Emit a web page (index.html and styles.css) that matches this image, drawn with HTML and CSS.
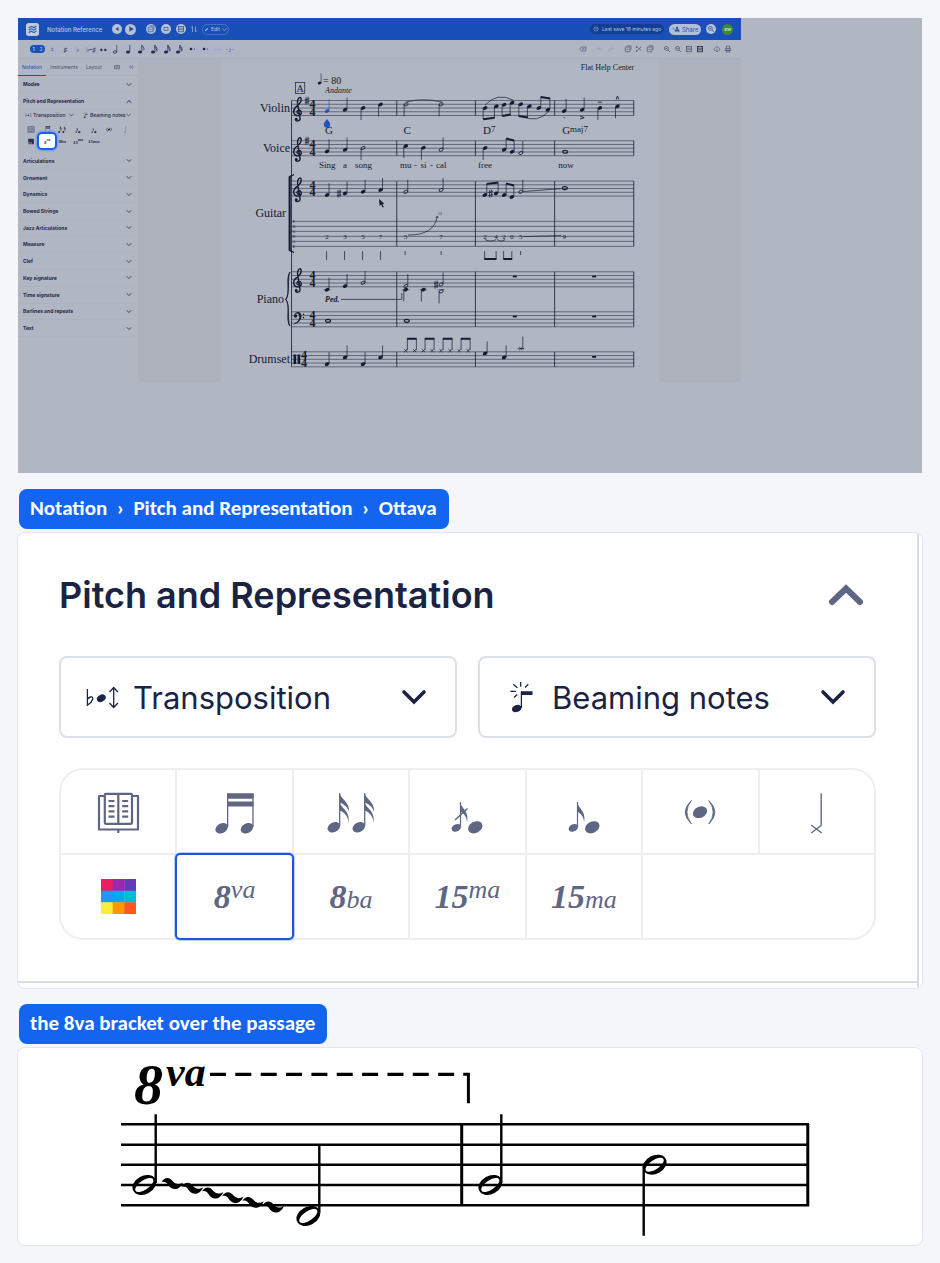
FILE: index.html
```html
<!DOCTYPE html>
<html lang="en">
<head>
    <meta charset="UTF-8">
    <meta name="viewport" content="width=device-width, initial-scale=1.0">
    <title>Ottava - Notation Reference</title>
    <link rel="stylesheet" href="styles.css">
</head>
<body>

<!-- shared icons -->
<svg class="defs" width="0" height="0" aria-hidden="true">
    <defs>
        <symbol id="i-book" viewBox="0 0 60 50">
            <g fill="none" stroke="currentColor" stroke-width="2.200" stroke-linejoin="round">
                <path d="M16 9h-5v33.500h39V9h-5"/>
                <rect x="16.800" y="6.800" width="27.200" height="30" rx="1"/>
                <path d="M30.300 7v29.500M30.300 43v3"/>
                <path d="M20.500 14h6M20.500 19.200h6M20.500 24.400h6M20.500 29.600h6M34.200 14h6M34.200 19.200h6M34.200 24.400h6M34.200 29.600h6"/>
            </g>
        </symbol>
        <symbol id="i-beam" viewBox="0 0 60 50">
            <g fill="currentColor">
                <ellipse cx="16.700" cy="41.200" rx="6.600" ry="4.800" transform="rotate(-28 16.700 41.200)"/>
                <ellipse cx="42" cy="41.200" rx="6.600" ry="4.800" transform="rotate(-28 42 41.200)"/>
                <path d="M22 6.200h26.500v5.600H22zM22 14.400h26.500v5.200H22z"/>
                <path d="M22 6.200h1.300V40H22zM47.300 6.200h1.300V40h-1.300z"/>
            </g>
        </symbol>
        <symbol id="i-flags" viewBox="0 0 60 50">
            <g id="flagged">
                <ellipse cx="12.800" cy="40.200" rx="6.600" ry="4.800" transform="rotate(-28 12.800 40.200)" fill="currentColor"/>
                <path d="M18.700 6.200V39" stroke="currentColor" stroke-width="1.300"/>
                <path d="M18.700 6c.8 6 10.500 9 9.300 19-1.200-6-7-8.500-9.300-9.500zM18.700 15c.8 6 11.500 9 8.600 21.500.6-8-5.500-12-8.600-13z" fill="currentColor"/>
            </g>
            <use href="#flagged" x="25"/>
        </symbol>
        <symbol id="i-grace" viewBox="0 0 60 50">
            <ellipse cx="19.300" cy="40.900" rx="4.900" ry="3.600" transform="rotate(-28 19.300 40.900)" fill="currentColor"/>
            <path d="M23.500 15V40" stroke="currentColor" stroke-width="1.200"/>
            <path d="M23.200 15c.8 6 9.500 9.500 6.800 20.500 0-6-3.800-9.500-6.800-11z" fill="currentColor"/>
            <ellipse cx="38.300" cy="40.300" rx="7.600" ry="5.600" transform="rotate(-28 38.300 40.300)" fill="currentColor"/>
        </symbol>
        <symbol id="i-slash" viewBox="0 0 60 50">
            <use href="#i-grace" width="60" height="50"/>
            <path d="M18 33L30.500 21.500" stroke="currentColor" stroke-width="1.500"/>
        </symbol>
        <symbol id="i-paren" viewBox="0 0 60 50">
            <ellipse cx="30" cy="25.200" rx="7.500" ry="5.500" transform="rotate(-25 30 25.200)" fill="currentColor"/>
            <path d="M21.400 13.500Q9 25 21.400 37Q12.500 25 21.400 13.500zM38.800 13.500Q51 25 38.800 37Q47.500 25 38.800 13.500z" stroke="currentColor" stroke-width=".8" fill="currentColor"/>
        </symbol>
        <symbol id="i-cross" viewBox="0 0 60 50">
            <path d="M34.200 6.200V37.800M24.200 38l10.500 8M34.700 38l-10.500 8" stroke="currentColor" stroke-width="1.400"/>
        </symbol>
        <symbol id="i-colors" viewBox="0 0 35 35">
            <path fill="#e91e63" d="M0 0h12v12H0z"/><path fill="#9c27b0" d="M11.700 0h12v12h-12z"/><path fill="#673ab7" d="M23.300 0H35v12H23.300z"/>
            <path fill="#2196f3" d="M0 11.700h12v12H0z"/><path fill="#03a9f4" d="M11.700 11.700h12v12h-12z"/><path fill="#00bcd4" d="M23.300 11.700H35v12H23.300z"/>
            <path fill="#ffeb3b" d="M0 23.300h12V35H0z"/><path fill="#ff9800" d="M11.700 23.300h12V35h-12z"/><path fill="#ff5722" d="M23.300 23.300H35V35H23.300z"/>
        </symbol>
        <symbol id="i-transpose" viewBox="0 0 36 40">
            <path d="M3.400 12V28.300C9 25 10.500 19 6.500 20c-1.500.4-3 2-3 2" fill="none" stroke="currentColor" stroke-width="1.300"/>
            <ellipse cx="17.300" cy="21.300" rx="4.700" ry="3.400" transform="rotate(-28 17.300 21.300)" fill="currentColor"/>
            <path d="M29.700 10.800v19.500M25.500 15l4.200-4.500 4.200 4.500M25.500 26l4.200 4.500 4.200-4.500" fill="none" stroke="currentColor" stroke-width="1.300"/>
        </symbol>
        <symbol id="i-beaming" viewBox="0 0 36 40">
            <ellipse cx="13.700" cy="31.500" rx="4.900" ry="3.500" transform="rotate(-20 13.700 31.500)" fill="currentColor"/>
            <path d="M18 14.200h11.500v3.800H18z" fill="currentColor"/>
            <path d="M18.400 14.500V31M17.700 5v4.800M25.300 7.200L22 10.500M10.300 7.300l4 3.500M7.300 14.400h5.600M14.300 17.500L11 20.500" stroke="currentColor" stroke-width="1.300"/>
        </symbol>
        <symbol id="i-down" viewBox="0 0 28 20">
            <path d="M4 5l10 10L24 5" fill="none" stroke="currentColor" stroke-width="3.600" stroke-linecap="round"/>
        </symbol>
        <symbol id="i-up" viewBox="0 0 40 26">
            <path d="M6 20L20 6.500 34 20" fill="none" stroke="currentColor" stroke-width="6" stroke-linecap="round"/>
        </symbol>
        <!-- small toolbar notes -->
        <symbol id="t-half" viewBox="0 0 10 12"><ellipse cx="4" cy="9" rx="1.700" ry="1.200" fill="none" stroke="currentColor" stroke-width=".7"/><path d="M5.800 2v7" stroke="currentColor" stroke-width=".6"/></symbol>
        <symbol id="t-quarter" viewBox="0 0 10 12"><ellipse cx="4" cy="9" rx="2" ry="1.500" fill="currentColor"/><path d="M5.800 2v7" stroke="currentColor" stroke-width=".7"/></symbol>
        <symbol id="t-eighth" viewBox="0 0 10 12"><use href="#t-quarter" width="10" height="12"/><path d="M5.800 2c.5 2 3 2 2 5" fill="none" stroke="currentColor" stroke-width=".8"/></symbol>
        <symbol id="t-sixteenth" viewBox="0 0 10 12"><use href="#t-eighth" width="10" height="12"/><path d="M5.800 4c.5 2 3 2 2 4.500" fill="none" stroke="currentColor" stroke-width=".8"/></symbol>
        <symbol id="t-dot" viewBox="0 0 10 12"><circle cx="4" cy="6" r="1.300" fill="currentColor"/><circle cx="7.500" cy="6" r=".6" fill="currentColor"/></symbol>
        <symbol id="t-box" viewBox="0 0 10 10"><rect x="1.500" y="2.500" width="6" height="6" rx="1" fill="none" stroke="currentColor" stroke-width=".9"/><path d="M3.500 1h5.200v5M3 5.500h3" fill="none" stroke="currentColor" stroke-width=".8"/></symbol>
        <symbol id="t-lens" viewBox="0 0 10 10"><circle cx="4.300" cy="4.300" r="2.500" fill="none" stroke="currentColor" stroke-width=".9"/><path d="M6.200 6.200l2.500 2.500M3 4.300h2.600" stroke="currentColor" stroke-width=".9"/></symbol>
        <symbol id="t-page" viewBox="0 0 10 10"><rect x="2" y="2" width="6" height="6.500" fill="none" stroke="currentColor" stroke-width=".9"/><path d="M2 4h6M2 6h6" stroke="currentColor" stroke-width=".8"/></symbol>
    </defs>
</svg>

<main class="page">

    <!-- editor overview -->
    <section class="stage">
        <div class="app">
            <header class="app-bar">
                <svg class="logo" viewBox="0 0 12 12"><rect width="12" height="12" rx="2.500" fill="#c3cbda"/><path d="M2.500 4.500q2-2 3.500-.8t3.500-.9M2.500 6.700q2-2 3.500-.8t3.500-.9M2.500 9q2-2 3.500-.8t3.500-.9" fill="none" stroke="#255bb5" stroke-width="1.100"/></svg>
                <h1>Notation Reference</h1>
                <div class="transport">
                    <button aria-label="Rewind"><svg viewBox="0 0 10 10"><path d="M7 2.500v5L3 5z" fill="currentColor"/></svg></button>
                    <button class="play" aria-label="Play"><svg viewBox="0 0 10 10"><path d="M3 1.500v7L8.500 5z" fill="currentColor"/></svg></button>
                </div>
                <div class="modes">
                    <button aria-label="Mixer"><svg viewBox="0 0 10 10"><use href="#t-box"/></svg></button>
                    <button aria-label="Keyboard"><svg viewBox="0 0 10 10"><rect x="2.500" y="3" width="5" height="4" fill="none" stroke="currentColor" stroke-width=".8"/></svg></button>
                    <button aria-label="Print view"><svg viewBox="0 0 10 10"><use href="#t-page"/></svg></button>
                </div>
                <svg class="swap" viewBox="0 0 8 8"><path d="M2.500 7V1.500M1.200 2.800l1.300-1.500M5.500 1.500V7M6.800 5.500L5.500 7" fill="none" stroke="currentColor" stroke-width=".6"/></svg>
                <button class="edit"><svg viewBox="0 0 8 8"><path d="M1.500 6.500l.5-1.700L5.500 1.500l1.200 1.200L3.200 6z" fill="currentColor"/></svg>Edit<svg viewBox="0 0 28 20"><use href="#i-down"/></svg></button>
                <span class="saved"><svg viewBox="0 0 8 8"><circle cx="4" cy="4" r="2.800" fill="none" stroke="currentColor" stroke-width=".7"/><path d="M4 2.500V4l1 .6" fill="none" stroke="currentColor" stroke-width=".6"/></svg>Last save 16 minutes ago</span>
                <button class="share"><svg viewBox="0 0 10 8"><circle cx="6.500" cy="2.500" r="1.500" fill="currentColor"/><path d="M3.500 7c0-3.500 6-3.500 6 0zM.5 3.500h2.600M1.800 2.200v2.600" fill="currentColor" stroke="currentColor" stroke-width=".6"/></svg>Share</button>
                <button class="round" aria-label="Search"><svg viewBox="0 0 10 10"><use href="#t-lens"/></svg></button>
                <span class="avatar">SW</span>
            </header>

            <div class="toolbar">
                <div class="notes">
                    <span class="voice"><b>1</b>2</span>
                    <button>&#9838;</button>
                    <button>&#9839;</button>
                    <button>&#9837;</button>
                    <button>&#9837;&#8211;&#9839;</button>
                    <button>&#8226;&#8226;</button>
                    <button aria-label="Half"><svg><use href="#t-half"/></svg></button>
                    <button aria-label="Quarter"><svg><use href="#t-quarter"/></svg></button>
                    <button aria-label="Eighth"><svg><use href="#t-eighth"/></svg></button>
                    <button aria-label="16th"><svg><use href="#t-sixteenth"/></svg></button>
                    <button aria-label="32nd"><svg><use href="#t-sixteenth"/></svg></button>
                    <button aria-label="64th"><svg><use href="#t-sixteenth"/></svg></button>
                    <button aria-label="Dot"><svg><use href="#t-dot"/></svg></button>
                    <button aria-label="Double dot"><svg><use href="#t-dot"/></svg></button>
                    <button class="faint">&#8943;</button>
                    <button class="tuplet">&#8901;&#9834;&#8901;</button>
                </div>
                <div class="tools">
                    <button aria-label="Delete"><svg viewBox="0 0 10 10"><path d="M1 5l2-2.500h5.500v5H3zM4.500 4l2 2M6.500 4l-2 2" fill="none" stroke="currentColor" stroke-width=".8"/></svg></button>
                    <span class="pair faint">
                        <button aria-label="Undo"><svg viewBox="0 0 10 10"><path d="M2 4.500h4q3 1 1 3.500M4 2.500l-2 2 2 2" fill="none" stroke="currentColor" stroke-width=".7"/></svg></button>
                        <button aria-label="Redo"><svg viewBox="0 0 10 10"><path d="M8 4.500H4Q1 5.500 3 8M6 2.500l2 2-2 2" fill="none" stroke="currentColor" stroke-width=".7"/></svg></button>
                    </span>
                    <span class="pair">
                        <button aria-label="Copy"><svg><use href="#t-box"/></svg></button>
                        <button aria-label="Cut"><svg viewBox="0 0 10 10"><path d="M2 2l6 5M2 8l6-6" stroke="currentColor" stroke-width=".8"/><circle cx="2" cy="2.500" r="1" fill="currentColor"/><circle cx="2" cy="7.500" r="1" fill="currentColor"/></svg></button>
                        <button aria-label="Paste"><svg><use href="#t-box"/></svg></button>
                    </span>
                    <span class="pair">
                        <button aria-label="Zoom in"><svg><use href="#t-lens"/></svg></button>
                        <button aria-label="Zoom out"><svg><use href="#t-lens"/></svg></button>
                        <button aria-label="Page"><svg><use href="#t-page"/></svg></button>
                        <button class="dark" aria-label="Layout"><svg><use href="#t-page"/></svg></button>
                    </span>
                    <span class="pair">
                        <button aria-label="Download"><svg viewBox="0 0 10 10"><path d="M3 7H2Q.5 5 2.500 4q2.500-4 5 0Q9.500 5 8 7H7M5 4.500v4M3.800 7.300L5 8.500l1.200-1.200" fill="none" stroke="currentColor" stroke-width=".8"/></svg></button>
                        <button aria-label="Print"><svg viewBox="0 0 10 10"><path d="M3 4V1.500h4V4M1.500 4.500h7V7h-7zM3 6.500h4v2.300H3z" fill="none" stroke="currentColor" stroke-width=".9"/></svg></button>
                    </span>
                </div>
            </div>

            <div class="workspace">
                <aside class="side">
                    <nav class="tabs">
                        <a class="active" href="#notation">Notation</a>
                        <a href="#instruments">Instruments</a>
                        <a href="#layout">Layout</a>
                        <svg class="kbd" viewBox="0 0 8 8"><rect x="1" y="2" width="6" height="4.500" fill="none" stroke="currentColor" stroke-width=".8"/><path d="M2 3.600h4M2 5h4" stroke="currentColor" stroke-width=".7"/></svg>
                        <svg viewBox="0 0 8 8"><path d="M4 1.500L1.800 4 4 6.500M3 4h4M6.500 1.500L4.800 4l1.700 2.500" fill="none" stroke="currentColor" stroke-width=".6"/></svg>
                    </nav>
                    <button class="row">Modes<svg><use href="#i-down"/></svg></button>
                    <button class="row">Pitch and Representation<svg><use href="#i-up"/></svg></button>
                    <div class="mini">
                        <div class="mini-selects">
                            <label><svg class="lead"><use href="#i-transpose"/></svg><select aria-label="Transposition"><option>Transposition</option></select><svg class="arrow"><use href="#i-down"/></svg></label>
                            <label><svg class="lead"><use href="#i-beaming"/></svg><select aria-label="Beaming notes"><option>Beaming notes</option></select><svg class="arrow"><use href="#i-down"/></svg></label>
                        </div>
                        <div class="mini-grid">
                            <button aria-label="Book"><svg><use href="#i-book"/></svg></button>
                            <button aria-label="Beam"><svg><use href="#i-beam"/></svg></button>
                            <button aria-label="Flags"><svg><use href="#i-flags"/></svg></button>
                            <button aria-label="Acciaccatura"><svg><use href="#i-slash"/></svg></button>
                            <button aria-label="Appoggiatura"><svg><use href="#i-grace"/></svg></button>
                            <button aria-label="Ghost note"><svg><use href="#i-paren"/></svg></button>
                            <button aria-label="Note head"><svg><use href="#i-cross"/></svg></button>
                            <button aria-label="Colors"><svg viewBox="0 0 8 8"><path d="M1.500 1.500h5v5h-2V4.500h-3z" fill="#28304f"/><path d="M1.500 4.500h3v2h-3z" fill="#6c5570"/></svg></button>
                            <button class="spot"><i>8<sup>va</sup></i></button>
                            <button><i>8ba</i></button>
                            <button><i>15<sup>ma</sup></i></button>
                            <button><i>15ma</i></button>
                        </div>
                    </div>
                    <div class="rows">
                        <button class="row">Articulations<svg><use href="#i-down"/></svg></button>
                        <button class="row">Ornament<svg><use href="#i-down"/></svg></button>
                        <button class="row">Dynamics<svg><use href="#i-down"/></svg></button>
                        <button class="row">Bowed Strings<svg><use href="#i-down"/></svg></button>
                        <button class="row">Jazz Articulations<svg><use href="#i-down"/></svg></button>
                        <button class="row">Measure<svg><use href="#i-down"/></svg></button>
                        <button class="row">Clef<svg><use href="#i-down"/></svg></button>
                        <button class="row">Key signature<svg><use href="#i-down"/></svg></button>
                        <button class="row">Time signature<svg><use href="#i-down"/></svg></button>
                        <button class="row">Barlines and repeats<svg><use href="#i-down"/></svg></button>
                        <button class="row">Text<svg><use href="#i-down"/></svg></button>
                    </div>
                </aside>

                <!-- the sheet -->
                <div class="sheet">
                    <svg class="score" viewBox="221 59 438 323">
                        <defs>
                            <ellipse id="hd" rx="2.400" ry="1.700" transform="rotate(-25)"/>
                            <g id="q"><use href="#hd"/><path class="stem" d="M2 -.5V-12"/></g>
                            <g id="qd"><use href="#hd"/><path class="stem" d="M-2 .5V12"/></g>
                            <g id="hh"><ellipse rx="2.200" ry="1.400" transform="rotate(-25)" fill="none" stroke="#151b30" stroke-width=".8"/></g>
                            <g id="h"><use href="#hh"/><path class="stem" d="M2 -.5V-12"/></g>
                            <g id="hdn"><use href="#hh"/><path class="stem" d="M-2 .5V12"/></g>
                            <ellipse id="w" rx="2.500" ry="1.500" fill="none" stroke="#151b30" stroke-width="1.200"/>
                            <path id="sharp" d="M-1 -3.500V4M1 -4V3.500M-2.200 -1L2.200 -2M-2.200 2L2.200 1" stroke="#151b30" stroke-width=".8" fill="none"/>
                            <g id="treble"><path d="M.8 2C-1.500 2-1.800-1.400.8-1.800 4-1.800 4.200 3.500.3 3.800-5.500 3.800-5.500-2.500-1.500-5.500 2-8 4-10 3-13.500 1.400-16-1.200-12-.4-8.500L2 6.500C2.200 9.500-1.800 9.800-2.600 8" fill="none" stroke="#151b30" stroke-width="1.400"/><circle cx="-1.800" cy="7.400" r="1.400"/></g>
                            <g id="bass"><path d="M-3.500 0C-2.500-5 4-5 4 .8 3.500 5.500-1 8-4.500 9 0 6 1.800 4 1.800.8 1.500-3-2-3-3.500 0z"/><circle cx="-2" cy=".4" r="1.700"/><circle cx="6" cy="-1.400" r=".8"/><circle cx="6" cy="2" r=".8"/></g>
                            <g id="sig"><text class="sig" y="7.600">4</text><text class="sig" y="15.200">4</text></g>
                            <path id="staff" class="line" d="M291.500 0H633.700M291.500 3.750H633.700M291.500 7.500H633.700M291.500 11.250H633.700M291.500 15H633.700"/>
                            <path id="bars" class="bar" d="M396.700 0V15M475.300 0V15M554.500 0V15M633.600 0V15"/>
                            <path id="rest" d="M-2 -.8h4V1h-4z"/>
                            <path id="x" d="M-1.600 -1.500L1.600 1.500M-1.600 1.500L1.600 -1.500" stroke="#151b30" stroke-width=".7"/>
                        </defs>

                        <text class="credit" x="634" y="70">Flat Help Center</text>
                        <rect x="295.300" y="82.400" width="9.400" height="11" fill="none" stroke="#151b30" stroke-width=".7"/>
                        <text class="mark" x="300" y="91.500">A</text>
                        <use href="#q" transform="translate(319.500 83) scale(.8)"/>
                        <text class="tempo" x="323" y="84">= 80</text>
                        <text class="andante" x="325" y="93">Andante</text>

                        <g class="names">
                            <text x="290" y="112">Violin</text>
                            <text x="290" y="152">Voice</text>
                            <text x="286" y="217">Guitar</text>
                            <text x="284" y="303">Piano</text>
                            <text x="290" y="363">Drumset</text>
                        </g>

                        <!-- staves -->
                        <use href="#staff" y="100.500"/><use href="#bars" y="100.500"/>
                        <use href="#staff" y="140.700"/><use href="#bars" y="140.700"/>
                        <use href="#staff" y="181"/>
                        <path class="line" d="M291.500 221.300H633.700M291.500 226.300H633.700M291.500 231.300H633.700M291.500 236.300H633.700M291.500 241.300H633.700M291.500 246.300H633.700"/>
                        <path class="bar" d="M396.700 181V246.300M475.300 181V246.300M554.500 181V246.300M633.600 181V246.300"/>
                        <use href="#staff" y="271.700"/><use href="#staff" y="311.700"/>
                        <path class="bar" d="M396.700 271.700V326.700M475.300 271.700V326.700M554.500 271.700V326.700M633.600 271.700V326.700"/>
                        <use href="#staff" y="351.700"/><use href="#bars" y="351.700"/>
                        <path class="bar" d="M291.500 100.500V366.700"/>
                        <path d="M294 174.500l-5 2V250.500l5 2-3.800-2.500V177z" stroke="#151b30" stroke-width=".9"/>
                        <path d="M290 272c-5 5 1 22-4.500 27.300C291 304 285 321 290 326c-3-5 0-22-4-26.700 4-5.300 1-22 4-27.300z" stroke="#151b30" stroke-width=".8"/>

                        <!-- clefs and signatures -->
                        <use href="#treble" x="298" y="111.800"/><use href="#treble" x="298" y="152"/><use href="#treble" x="298" y="192.300"/><use href="#treble" x="298" y="283"/>
                        <use href="#bass" x="297.500" y="315.500"/>
                        <path d="M293.500 354.500h2.600v9.500h-2.600zM297.500 354.500h2.600v9.500h-2.600z"/>
                        <use href="#sharp" x="307" y="100.700"/><use href="#sharp" x="307" y="140.700"/>
                        <use href="#sig" x="312.500" y="100.500"/><use href="#sig" x="312.500" y="140.700"/><use href="#sig" x="312.500" y="181"/><use href="#sig" x="312.500" y="271.700"/><use href="#sig" x="312.500" y="311.700"/><use href="#sig" x="304" y="351.700"/>
                        <g class="tuning"><text x="294" y="223">E</text><text x="294" y="228">B</text><text x="294" y="233">G</text><text x="294" y="238">D</text><text x="294" y="243">A</text><text x="294" y="248">E</text></g>

                        <!-- violin -->
                        <g fill="#1c55bd"><use href="#hd" x="327" y="111"/><path d="M328.700 110.500h.6V99h-.6z"/><path d="M327 119q6 6.500 1.500 8.500h-3Q321 125.500 327 119z"/></g>
                        <use href="#q" x="345" y="109.700"/><use href="#qd" x="363" y="108"/><use href="#qd" x="380.500" y="104.500"/>
                        <use href="#hdn" x="406" y="104.300"/><use href="#hdn" x="441" y="104.300"/>
                        <path class="slur" d="M406 102q17-4.500 36 0M485 105Q497 92 513 100M522 116q15 8 27-5"/>
                        <use href="#hd" x="485" y="108"/><use href="#hd" x="496.300" y="106.300"/><use href="#hd" x="504" y="104.700"/><use href="#hd" x="512" y="102.700"/><use href="#hd" x="520.700" y="104.300"/><use href="#hd" x="529.300" y="106.300"/><use href="#hd" x="538.700" y="108"/><use href="#hd" x="547.700" y="109.700"/>
                        <path class="stem" d="M483 108v11M494.300 106v12M502 105v11M510 103v12M518.700 104v12M527.300 106v12M540.700 108V97M549.700 109V98"/>
                        <path class="beam" d="M483 119.300l11.500-1.500M502 116l8.500-1.500M518.500 116l9 1.500M540.500 97l9.500 1.500"/>
                        <use href="#q" x="564" y="111"/><use href="#q" x="582" y="109.700"/><use href="#qd" x="599.700" y="108"/><use href="#qd" x="617.300" y="106.300"/>
                        <circle cx="564" cy="117.600" r=".6"/>
                        <path d="M580 116.200l4 1.400-4 1.400M597.700 102.200h4M616 99.500l1.300-3.500 1.300 3.500" fill="none" stroke="#151b30" stroke-width=".9"/>
                        <g class="chords"><text x="325" y="134">G</text><text x="403.500" y="134">C</text><text x="483" y="134">D<tspan class="small" dy="-2">7</tspan></text><text x="562" y="134">G<tspan class="small" dy="-2">maj7</tspan></text></g>

                        <!-- voice -->
                        <use href="#q" x="327" y="151.300"/><use href="#q" x="345" y="149.700"/><use href="#hdn" x="363" y="148"/>
                        <use href="#qd" x="405.700" y="146"/><use href="#qd" x="423.300" y="147.700"/><use href="#h" x="441" y="149.700"/>
                        <use href="#qd" x="485" y="148"/><use href="#hd" x="504" y="149.700"/><use href="#hd" x="512" y="151.700"/><use href="#h" x="520.700" y="153"/><use href="#w" x="565" y="151.700"/>
                        <path class="stem" d="M506 149V138.500M514 151V140.500"/><path class="beam" d="M506 138.500l8 2"/>
                        <g class="lyrics"><text x="319" y="167.500">Sing</text><text x="343" y="167.500">a</text><text x="355" y="167.500">song</text><text x="400" y="167.500">mu</text><text x="414" y="167.500">-</text><text x="420.500" y="167.500">si</text><text x="430" y="167.500">-</text><text x="436" y="167.500">cal</text><text x="478" y="167.500">free</text><text x="558" y="167.500">now</text></g>

                        <!-- guitar -->
                        <use href="#q" x="327" y="195"/><use href="#sharp" x="339" y="193.500"/><use href="#q" x="345" y="193.300"/><use href="#q" x="363" y="191.700"/><use href="#q" x="380.500" y="190"/>
                        <use href="#h" x="405.700" y="191.700"/><use href="#h" x="441" y="190"/>
                        <use href="#hd" x="484.700" y="195"/><use href="#sharp" x="490.500" y="193.500"/><use href="#hd" x="496" y="193.300"/><use href="#hd" x="504" y="195"/><use href="#hd" x="511.700" y="197"/><use href="#h" x="520.700" y="191.700"/><use href="#w" x="564.700" y="188"/>
                        <path class="stem" d="M486.700 195V184M498 193V182.500M506 195V183.500M513.700 197V185.500M523 191.500L561 188.500"/>
                        <path class="beam" d="M486.500 184l11.700-1.500M506 183.500l8 2"/>
                        <path d="M379 199l.5 7 1.600-1.500 1.400 3 1.200-.6-1.400-2.900 2-.3z"/>
                        <g class="tab"><text x="327" y="238.500">2</text><text x="345" y="238.500">3</text><text x="363" y="238.500">5</text><text x="380.500" y="238.500">7</text><text x="405.500" y="238.500">5</text><text x="441" y="238.500">7</text><text x="485" y="238.500">2</text><text x="496" y="238.500">4</text><text x="504" y="238.500">2</text><text x="511.700" y="238.500">0</text><text x="520.700" y="238.500">5</text><text x="564" y="238.500">9</text></g>
                        <text class="tiny" x="440" y="215">12</text>
                        <path class="slur" d="M408 235q26 0 29-18M435.800 218l1.300-2 1 2M485 239.500q6 3 11 0M497 239.500q4 3 8 0M523 236.500L561 235.500"/>
                        <path class="stem" d="M326.500 251v9M344.500 251v9M362.500 251v9M380.500 251v9M405 251v4M441 251v4M484.500 251v8M496 251v8M503.500 251v8M511.700 251v8M520.500 251v4"/>
                        <path class="beam" d="M484.200 259h12.100M503.200 259H512"/>

                        <!-- piano -->
                        <path class="line" d="M323.500 289.700h7M402 289.700h7.500M419.500 289.700h7.500M437.500 289.700h7"/>
                        <use href="#q" x="327" y="289.700"/><use href="#q" x="345" y="286"/><use href="#h" x="363" y="282.700"/>
                        <use href="#h" x="405.700" y="286"/><use href="#qd" x="405.700" y="289.500"/><use href="#qd" x="423.300" y="289.500"/><use href="#sharp" x="436" y="284.500"/><use href="#h" x="441" y="284.300"/><use href="#hdn" x="441" y="291.300"/>
                        <text class="ped" x="325" y="301.500">Ped.</text>
                        <path class="stem" d="M341 299.300H401.700V293"/>
                        <use href="#w" x="328" y="320.700"/><use href="#w" x="406.700" y="320.700"/>
                        <use href="#rest" x="514.700" y="276.300"/><use href="#rest" x="594" y="276.300"/><use href="#rest" x="514.700" y="316.300"/><use href="#rest" x="594" y="316.300"/><use href="#rest" x="594" y="356.700"/>

                        <!-- drumset -->
                        <use href="#q" x="327" y="364"/><use href="#q" x="345" y="357.300"/><use href="#q" x="363" y="364"/><use href="#q" x="380.500" y="357.300"/>
                        <use href="#x" x="405.700" y="350.500"/><use href="#x" x="414.500" y="350.500"/><use href="#x" x="423.300" y="350.500"/><use href="#x" x="432" y="350.500"/><use href="#x" x="441" y="350.500"/><use href="#x" x="450" y="350.500"/><use href="#x" x="459" y="350.500"/><use href="#x" x="468" y="350.500"/>
                        <path class="stem" d="M407.300 350V338.500M416.300 350V338.500M425 350V338.500M434 350V338.500M443 350V338.500M452 350V338.500M461 350V338.500M470 350V338.500"/>
                        <path class="beam" d="M407 338.700h9.600M424.700 338.700h9.600M442.700 338.700h9.600M460.700 338.700h9.600"/>
                        <use href="#q" x="485" y="353.300"/><use href="#q" x="504" y="357.300"/><use href="#x" x="520.700" y="348.500"/><path class="stem" d="M522.700 349V336.500M517.500 348.500h6.500"/>
                    </svg>
                </div>
            </div>
        </div>
    </section>

    <!-- palette close-up -->
    <h2 class="tag">Notation &nbsp;› &nbsp;Pitch and Representation &nbsp;› &nbsp;Ottava</h2>
    <section class="card">
        <div class="edge">
            <div class="panel">
                <div class="panel-head">
                    <h3>Pitch and Representation</h3>
                    <button class="collapse" aria-label="Collapse"><svg><use href="#i-up"/></svg></button>
                </div>
                <div class="selects">
                    <label class="select"><svg class="lead"><use href="#i-transpose"/></svg><select aria-label="Transposition"><option>Transposition</option></select><svg class="arrow"><use href="#i-down"/></svg></label>
                    <label class="select"><svg class="lead"><use href="#i-beaming"/></svg><select aria-label="Beaming notes"><option>Beaming notes</option></select><svg class="arrow"><use href="#i-down"/></svg></label>
                </div>
                <div class="palette">
                    <button aria-label="Book"><svg><use href="#i-book"/></svg></button>
                    <button aria-label="Beam"><svg><use href="#i-beam"/></svg></button>
                    <button aria-label="Flags"><svg><use href="#i-flags"/></svg></button>
                    <button aria-label="Acciaccatura"><svg><use href="#i-slash"/></svg></button>
                    <button aria-label="Appoggiatura"><svg><use href="#i-grace"/></svg></button>
                    <button aria-label="Ghost note"><svg><use href="#i-paren"/></svg></button>
                    <button aria-label="Note head"><svg><use href="#i-cross"/></svg></button>
                    <button aria-label="Colors"><svg class="colors"><use href="#i-colors"/></svg></button>
                    <button class="selected"><span class="octave">8<small class="raised">va</small></span></button>
                    <button><span class="octave">8<small>ba</small></span></button>
                    <button><span class="octave">15<small class="raised">ma</small></span></button>
                    <button><span class="octave">15<small>ma</small></span></button>
                </div>
            </div>
        </div>
    </section>

    <!-- result -->
    <h2 class="tag second">the 8va bracket over the passage</h2>
    <section class="card result">
        <svg class="passage" viewBox="0 0 697 197">
            <defs>
                <path id="half" fill-rule="evenodd" transform="rotate(-28)" d="M-12.500 0a12.500 9.200 0 1 0 25 0a12.500 9.200 0 1 0-25 0zM-10.500 1a10.500 4.600 -6 1 0 21-2a10.500 4.600 -6 1 0-21 2z"/>
                <path id="wave" d="M0 1C3-4 8-4 11 0c3 3.500 6 4 10.500 1.500C18 9.500 11 9.500 7.500 5 5.500 1.500 3 0 0 1z"/>
            </defs>
            <path d="M0 76.300H688M0 96.700H688M0 116.700H688M0 137H688M0 157.300H688" stroke="#000" stroke-width="2.400"/>
            <path d="M340.700 76v82M686.800 76v82" stroke="#000" stroke-width="3"/>
            <text class="eight" x="13" y="55.500">8</text>
            <text class="va" x="45" y="37.500">va</text>
            <path d="M89 26.300H343" stroke="#000" stroke-width="3.200" stroke-dasharray="16 9.350"/>
            <path d="M342.500 26.300h4.900v29" fill="none" stroke="#000" stroke-width="3"/>
            <path d="M34.700 66.300V135M198.300 96.700V165M380.300 66.300V135M522.700 117v70.700" stroke="#000" stroke-width="2.400"/>
            <use href="#half" x="23.300" y="137"/>
            <use href="#half" x="187.300" y="168"/>
            <use href="#half" x="369.300" y="137"/>
            <use href="#half" x="533.700" y="116.700"/>
            <use href="#wave" x="40.500" y="133"/>
            <use href="#wave" x="60.700" y="137.700"/>
            <use href="#wave" x="80.900" y="142.400"/>
            <use href="#wave" x="101.100" y="147.100"/>
            <use href="#wave" x="121.300" y="151.800"/>
            <use href="#wave" x="141.500" y="156.500"/>
        </svg>
    </section>

</main>

</body>
</html>
```

FILE: styles.css
```css
* {
    box-sizing: border-box;
}
body {
    margin: 0;
    background-color: #f4f6fa;
    color: #1b2344;
    font-family: Inter, sans-serif;
}
button, select {
    margin: 0;
    padding: 0;
    border: none;
    background: none;
    color: inherit;
    font: inherit;
    cursor: pointer;
}
select {
    appearance: none;
}
a {
    color: inherit;
    text-decoration: none;
}
svg {
    display: block;
    flex: none;
}
.defs {
    position: absolute;
}
.page {
    padding: 18px 17px 17px;
}

/* editor overview */
.stage {
    min-height: 455px;
    margin: 0 1px;
    background-color: #b1b6c3;
    color: #1f2848;
}
.app {
    width: 80%;
}
.app button {
    display: flex;
    align-items: center;
    justify-content: center;
}
.app-bar {
    display: flex;
    align-items: center;
    height: 22px;
    padding: 0 8px;
    background-color: #1850b8;
    color: #b9c8e2;
    font-size: 6px;
}
.app-bar h1 {
    width: 65px;
    margin: 0 0 0 8px;
    font-size: 6px;
    font-weight: 500;
    white-space: nowrap;
}
.logo {
    width: 13px;
    height: 13px;
}
.transport, .modes {
    display: flex;
    gap: 3px;
}
.modes {
    gap: 5px;
    margin-left: 10px;
}
.transport button, .modes button, .round {
    width: 10px;
    height: 10px;
    border-radius: 50%;
    background-color: #b6c1d6;
    color: #2c4f8f;
}
.transport svg, .modes svg, .round svg {
    width: 8px;
    height: 8px;
}
.transport .play {
    width: 11px;
    height: 11px;
}
.swap {
    width: 8px;
    height: 8px;
    margin-left: 4px;
}
.app .edit {
    gap: 2px;
    width: 27px;
    height: 11px;
    margin-left: 4px;
    border: 1px solid #4673c6;
    border-radius: 6px;
    font-size: 5px;
}
.edit svg {
    width: 5px;
    height: 5px;
}
.saved {
    display: flex;
    align-items: center;
    gap: 3px;
    height: 10px;
    margin-left: auto;
    padding: 0 3px;
    border-radius: 5px;
    background-color: #123f94;
    font-size: 5px;
    white-space: nowrap;
}
.saved svg {
    width: 6px;
    height: 6px;
}
.app .share {
    gap: 2px;
    width: 32px;
    height: 11px;
    margin: 0 5px;
    border-radius: 6px;
    background-color: #b3bfd6;
    color: #2455ab;
    font-size: 6px;
}
.share svg {
    width: 8px;
    height: 6px;
}
.avatar {
    width: 11px;
    margin-left: 6px;
    border-radius: 50%;
    background-color: #3f8a36;
    color: #cfe0cf;
    font-size: 4px;
    font-weight: 700;
    line-height: 11px;
    text-align: center;
}
.toolbar {
    display: flex;
    align-items: center;
    justify-content: space-between;
    height: 19px;
    padding: 0 8px 0 12px;
    border-bottom: 1px solid #a7adba;
    font-size: 7px;
}
.notes {
    display: flex;
    align-items: center;
    justify-content: space-between;
    width: 208px;
    height: 11px;
    padding-right: 3px;
    border-radius: 6px;
    background-color: #adb5c7;
}
.notes button {
    width: 10px;
}
.notes svg {
    width: 10px;
    height: 12px;
}
.voice {
    display: flex;
    align-items: center;
    justify-content: space-around;
    width: 15px;
    height: 8px;
    border-radius: 4px;
    background-color: #1850b8;
    color: #b9c8e2;
    font-size: 5px;
}
.faint {
    opacity: .3;
}
.notes .tuplet {
    opacity: .6;
}
.tools {
    display: flex;
    gap: 7px;
    color: #4a526c;
}
.pair {
    display: flex;
    gap: 1px;
}
.tools button {
    width: 10px;
}
.tools svg {
    width: 8px;
    height: 8px;
}
.dark {
    color: #10162b;
}
.workspace {
    display: flex;
    background-color: #adb1bc;
}
.side {
    width: 120px;
    background-color: #b1b6c3;
}
.tabs {
    display: flex;
    align-items: center;
    gap: 8px;
    height: 17px;
    border-bottom: 1px solid #a9aebb;
    padding: 0 4px;
    color: #4a526c;
    font-size: 5px;
}
.tabs .active {
    margin-left: -4px;
    padding: 0 4px;
    margin-right: -4px;
    border-bottom: 1px solid #1850b8;
    color: #1850b8;
    line-height: 16px;
}
.tabs svg {
    width: 6px;
    height: 6px;
}
.tabs .kbd {
    margin-left: auto;
}
.app .row {
    justify-content: space-between;
    width: 100%;
    height: 17px;
    padding: 0 6px 0 5px;
    border-bottom: 1px solid #adb2bf;
    font-size: 5px;
    font-weight: 700;
}
.row svg {
    width: 6px;
    height: 5px;
}
.rows {
    display: grid;
    grid-auto-rows: 1fr;
    height: 184px;
}
.app .rows .row {
    height: auto;
}
.mini {
    height: 43px;
    padding: 0 5px;
}
.mini-selects {
    display: grid;
    grid-template-columns: 1fr 1fr;
    gap: 4px;
    height: 10px;
    font-size: 5px;
    font-weight: 500;
}
.mini-selects label {
    display: flex;
    align-items: center;
    padding: 0 2px;
}
.mini-selects .lead {
    width: 7px;
    height: 8px;
}
.mini-selects select {
    flex: 1;
    min-width: 0;
    padding-left: 1px;
}
.mini-selects .arrow {
    width: 5px;
    height: 4px;
}
.mini-grid {
    display: grid;
    grid-template-columns: repeat(7, 1fr);
    grid-auto-rows: 12px;
    padding-top: 3px;
    font-family: "Liberation Serif", serif;
    font-size: 5px;
    font-weight: 700;
}
.mini-grid svg {
    width: 10px;
    height: 9px;
}
.mini-grid sup {
    font-size: 4px;
    line-height: 1;
}
.mini-grid .spot {
    z-index: 1;
    margin: -3px -3px -3px -2px;
    border: 2px solid #1365f0;
    border-radius: 5px;
    background-color: #ffffff;
    box-shadow: 0 0 2px 1px #6f9be6;
}
.sheet {
    flex: 1;
    margin: 0 82px 0 83px;
    background-color: #b1b6c3;
}

/* score drawing */
.score {
    width: 100%;
    fill: #151b30;
    font-family: "Liberation Serif", serif;
}
.line {
    stroke: #2b3147;
    stroke-width: .6;
}
.bar {
    stroke: #151b30;
    stroke-width: .8;
}
.stem {
    fill: none;
    stroke: #151b30;
    stroke-width: .7;
}
.beam {
    stroke: #151b30;
    stroke-width: 2;
}
.slur {
    fill: none;
    stroke: #151b30;
    stroke-width: .7;
}
.names {
    font-size: 12px;
    text-anchor: end;
}
.credit {
    font-size: 8px;
    text-anchor: end;
}
.mark {
    font-size: 10px;
    text-anchor: middle;
}
.tempo {
    font-size: 10px;
}
.andante {
    font-size: 8px;
    font-style: italic;
}
.sig {
    font-size: 12px;
    font-weight: 700;
    text-anchor: middle;
}
.chords {
    font-size: 11px;
}
.chords .small {
    font-size: 9px;
}
.lyrics {
    font-size: 9px;
}
.tab {
    font-size: 7px;
    text-anchor: middle;
}
.tuning, .tiny {
    font-size: 4px;
    text-anchor: middle;
}
.ped {
    font-size: 8px;
    font-style: italic;
    font-weight: 700;
}

/* labels */
.tag {
    width: fit-content;
    margin: 16px 0 3px 2px;
    padding: 0 12px 2px 11px;
    border-radius: 8px;
    background-color: #1365f0;
    color: #ffffff;
    font-family: Carlito, Lato, sans-serif;
    font-size: 21px;
    font-weight: 700;
    line-height: 38px;
}
.tag.second {
    margin-top: 15px;
}
.card {
    overflow: hidden;
    border: 1px solid #e3e5ef;
    border-radius: 8px;
    background-color: #ffffff;
}

/* palette close-up */
.edge {
    margin-right: 3px;
    border-right: 2px solid #d9dce2;
    padding-bottom: 5px;
}
.panel {
    padding: 36px 41px 41px;
    border-bottom: 2px solid #d9dce2;
}
.panel-head {
    display: flex;
    align-items: center;
    justify-content: space-between;
    padding-right: 10px;
}
.panel-head h3 {
    margin: 0;
    font-size: 36px;
    font-weight: 600;
    line-height: 52px;
}
.collapse {
    color: #5f6684;
}
.collapse svg {
    width: 40px;
    height: 26px;
}
.selects {
    display: grid;
    grid-template-columns: 1fr 1fr;
    gap: 21px;
    margin-top: 35px;
}
.select {
    display: grid;
    grid-template-columns: 72px 1fr 42px;
    align-items: center;
    height: 82px;
    border: 2px solid #dcdfe5;
    border-radius: 8px;
}
.select select {
    grid-area: 1 / 1 / 2 / 4;
    height: 100%;
    padding-left: 72px;
    font-size: 31px;
}
.select svg {
    grid-row: 1;
    z-index: 1;
    pointer-events: none;
}
.select .lead {
    grid-column: 1;
    width: 36px;
    height: 40px;
    margin-left: 23px;
}
.select .arrow {
    grid-column: 3;
    width: 28px;
    height: 20px;
    margin-left: -13px;
}
.palette {
    display: grid;
    grid-template-columns: repeat(7, 1fr);
    grid-auto-rows: 83px;
    gap: 2px;
    margin-top: 30px;
    border: 2px solid #eceef2;
    border-radius: 24px;
    color: #5f6684;
}
.palette button {
    display: flex;
    align-items: center;
    justify-content: center;
    box-shadow: 2px 0 #eceef2;
}
.palette button:nth-child(-n+6) {
    box-shadow: 2px 0 #eceef2, 0 2px #eceef2, 2px 2px #eceef2;
}
.palette button:nth-child(7) {
    box-shadow: 0 2px #eceef2;
}
.palette .selected {
    z-index: 1;
    border-radius: 3px;
    box-shadow: 0 0 0 2px #1d57d6, 0 0 0 3px #b5d2ff;
}
.palette svg {
    width: 60px;
    height: 50px;
}
.palette .colors {
    width: 35px;
    height: 35px;
}
.octave {
    font-family: "Liberation Serif", serif;
    font-size: 34px;
    font-style: italic;
    font-weight: 700;
    line-height: 40px;
}
.octave small {
    font-size: 26px;
    font-weight: 400;
    line-height: 0;
}
.octave .raised {
    vertical-align: 10px;
}

/* result */
.result {
    padding: 0 104px 0 103px;
}
.passage {
    width: 100%;
}
.eight, .va {
    font-family: "Liberation Serif", serif;
    font-size: 58px;
    font-style: italic;
    font-weight: 700;
}
.va {
    font-size: 42px;
}
```
